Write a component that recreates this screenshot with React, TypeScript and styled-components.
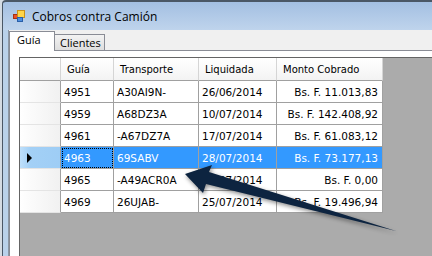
import React from "react";
import styled, { createGlobalStyle, css } from "styled-components";

const GlobalStyle = createGlobalStyle`
  html, body {
    margin: 0;
    padding: 0;
    width: 432px;
    height: 256px;
    overflow: hidden;
  }
`;

const Screen = styled.div`
  position: relative;
  width: 432px;
  height: 256px;
  overflow: hidden;
  display: flex;
  padding-left: 2px;
  box-sizing: border-box;
  background: #d4dbe3;
`;

const Frame = styled.div`
  flex: 1;
  display: flex;
  flex-direction: column;
  border-top: 2px solid #4a5766;
  border-left: 1px solid #4a5766;
  border-top-left-radius: 4px;
  background: linear-gradient(to bottom, #a3bfe2 0px, #bfd4ec 28px, #b9d1ea 28px);
`;

const TitleBar = styled.div`
  height: 28px;
  display: flex;
  align-items: center;
  padding-left: 10px;
  gap: 7px;
`;

const Title = styled.span`
  font-family: "Open Sans", "Noto Sans", sans-serif;
  font-size: 12px;
  color: #000;
`;

const Body = styled.div`
  flex: 1;
  display: flex;
  padding-left: 5px;
`;

const Client = styled.div`
  flex: 1;
  display: flex;
  flex-direction: column;
  border-left: 1px solid #8b97a5;
  background: #f0f0f0;
`;

const TabStrip = styled.div`
  height: 20px;
  display: flex;
  align-items: flex-end;
  border-bottom: 1px solid #898c95;
`;

const Tab = styled.div<{ $active?: boolean }>`
  box-sizing: border-box;
  display: flex;
  align-items: center;
  font-family: "Open Sans", "Noto Sans", sans-serif;
  font-size: 11px;
  color: #000;
  border: 1px solid #898c95;
  ${(p) =>
    p.$active
      ? css`
          width: 46px;
          height: 20px;
          margin-bottom: -1px;
          border-bottom: none;
          padding-left: 7px;
          padding-bottom: 5px;
          background: #fff;
          position: relative;
          z-index: 1;
        `
      : css`
          width: 50px;
          height: 16px;
          border-left: none;
          border-bottom: none;
          padding-left: 5px;
          background: linear-gradient(to bottom, #f3f3f3, #dedede);
        `}
`;

const TabPage = styled.div`
  flex: 1;
  display: flex;
  background: #fff;
  border-left: 1px solid #898c95;
  padding: 6px 0 0 9px;
`;

const Grid = styled.div`
  flex: 1;
  border-top: 1px solid #646464;
  border-left: 1px solid #646464;
  background: #ababab;
`;

const Row = styled.div<{ $header?: boolean }>`
  display: grid;
  grid-template-columns: 41px 53px 85px 78px 106px;
  width: 363px;
  height: ${(p) => (p.$header ? 23 : 22)}px;
`;

const Cell = styled.div<{ $right?: boolean; $selected?: boolean; $focus?: boolean }>`
  box-sizing: border-box;
  display: flex;
  align-items: center;
  justify-content: ${(p) => (p.$right ? "flex-end" : "flex-start")};
  padding: 0 ${(p) => (p.$right ? "4px" : "0")} 0 ${(p) => (p.$right ? "0" : "3px")};
  border-right: 1px solid #a0a0a0;
  border-bottom: 1px solid #a0a0a0;
  font-family: "DejaVu Sans", Verdana, sans-serif;
  font-size: 10.5px;
  white-space: nowrap;
  background: ${(p) => (p.$selected ? "#3399ff" : "#fff")};
  color: ${(p) => (p.$selected ? "#fff" : "#000")};
  ${(p) =>
    p.$focus &&
    css`
      outline: 1px dotted #000;
      outline-offset: -2px;
    `}
`;

const HeadCell = styled.div`
  box-sizing: border-box;
  display: flex;
  align-items: center;
  padding-left: 6px;
  border-right: 1px solid #d5d5d5;
  border-bottom: 1px solid #a0a0a0;
  background: linear-gradient(to bottom, #ffffff, #f3f3f3);
  font-family: "DejaVu Sans", Tahoma, sans-serif;
  font-size: 10px;
  color: #000;
  white-space: nowrap;
`;

const RowHead = styled.div<{ $selected?: boolean }>`
  box-sizing: border-box;
  display: flex;
  align-items: center;
  padding-left: 7px;
  border-right: 1px solid #a0a0a0;
  border-bottom: 1px solid #e4e4e4;
  background: ${(p) =>
    p.$selected
      ? "linear-gradient(to right, #bfe0fb 0, #a3d0f6 25%, #9ecdf5 100%)"
      : "linear-gradient(to right, #ffffff 0, #fbfbfb 25%, #f1f1f1 100%)"};
`;

const Caret = styled.span`
  width: 0;
  height: 0;
  border-top: 5px solid transparent;
  border-bottom: 5px solid transparent;
  border-left: 5px solid #000;
`;

const ArrowLayer = styled.svg`
  position: absolute;
  left: 0;
  top: 0;
  pointer-events: none;
  filter: drop-shadow(1px 2px 2px rgba(0, 0, 0, 0.45));
`;

const AppIcon = () => (
  <svg width="12" height="12" viewBox="0 0 12 12">
    <rect x="0.5" y="4.5" width="4" height="4" fill="#e8502a" stroke="#a83214" />
    <rect x="4.5" y="0.5" width="7" height="7" fill="#ffd54a" stroke="#c9911a" />
    <rect x="4.5" y="7.5" width="5" height="4" fill="#4c8fe0" stroke="#2a5fa8" />
  </svg>
);

const rows = [
  { guia: "4951", transporte: "A30AI9N-", fecha: "26/06/2014", monto: "Bs. F. 11.013,83" },
  { guia: "4959", transporte: "A68DZ3A", fecha: "10/07/2014", monto: "Bs. F. 142.408,92" },
  { guia: "4961", transporte: "-A67DZ7A", fecha: "17/07/2014", monto: "Bs. F. 61.083,12" },
  { guia: "4963", transporte: "69SABV", fecha: "28/07/2014", monto: "Bs. F. 73.177,13" },
  { guia: "4965", transporte: "-A49ACR0A", fecha: "28/07/2014", monto: "Bs. F. 0,00" },
  { guia: "4969", transporte: "26UJAB-", fecha: "25/07/2014", monto: "Bs. F. 19.496,94" },
];

const selectedIndex = 3;

export default function App() {
  return (
    <>
      <GlobalStyle />
      <Screen>
        <Frame>
          <TitleBar>
            <AppIcon />
            <Title>Cobros contra Camión</Title>
          </TitleBar>
          <Body>
            <Client>
              <TabStrip>
                <Tab $active>Guía</Tab>
                <Tab>Clientes</Tab>
              </TabStrip>
              <TabPage>
                <Grid>
                  <Row $header>
                    <HeadCell />
                    <HeadCell>Guía</HeadCell>
                    <HeadCell>Transporte</HeadCell>
                    <HeadCell>Liquidada</HeadCell>
                    <HeadCell>Monto Cobrado</HeadCell>
                  </Row>
                  {rows.map((r, i) => {
                    const sel = i === selectedIndex;
                    return (
                      <Row key={r.guia}>
                        <RowHead $selected={sel}>{sel && <Caret />}</RowHead>
                        <Cell $selected={sel} $focus={sel}>
                          {r.guia}
                        </Cell>
                        <Cell $selected={sel}>{r.transporte}</Cell>
                        <Cell $selected={sel}>{r.fecha}</Cell>
                        <Cell $selected={sel} $right>
                          {r.monto}
                        </Cell>
                      </Row>
                    );
                  })}
                </Grid>
              </TabPage>
            </Client>
          </Body>
        </Frame>
        <ArrowLayer width="432" height="256" viewBox="0 0 432 256">
          <polygon
            points="185,174 212,165 209,172 396,231 206,184 203,193"
            fill="#0d2440"
          />
        </ArrowLayer>
      </Screen>
    </>
  );
}
